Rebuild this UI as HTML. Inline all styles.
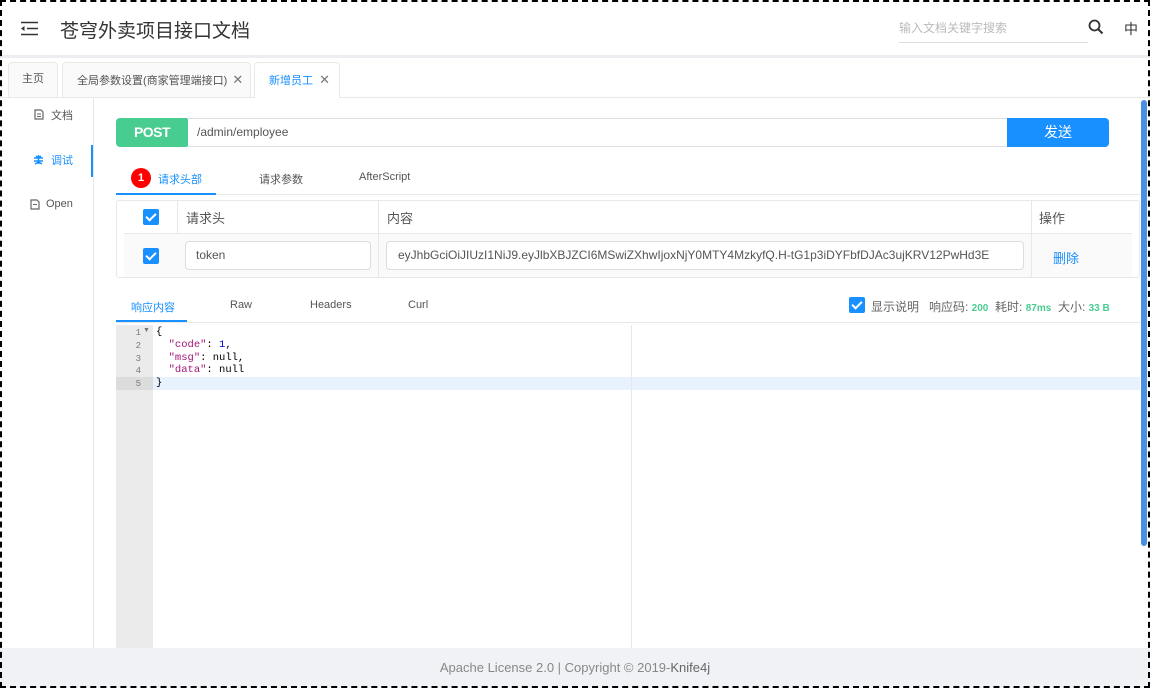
<!DOCTYPE html>
<html><head><meta charset="utf-8">
<style>
*{box-sizing:border-box;margin:0;padding:0}
body{width:1150px;height:688px;overflow:hidden;background:#fff;font-family:"Liberation Sans","Noto Sans CJK SC",sans-serif;color:#555;position:relative;font-size:12px}
.a{position:absolute}
.frame{position:absolute;left:0;top:0;width:1150px;height:688px;border:2px dashed #000;z-index:50;pointer-events:none}
.cb{position:absolute;width:16px;height:16px;background:#1890ff;border-radius:2px}
.cb:after{content:"";position:absolute;left:5px;top:2px;width:4px;height:8px;border:solid #fff;border-width:0 2px 2px 0;transform:rotate(45deg)}
.mono{font-family:"Liberation Mono",monospace;font-size:11px}
</style></head><body>
<div class="frame"></div>
<div class="a" style="left:0;top:0;width:1150px;height:55px;background:#fff"></div>
<svg class="a" style="left:21px;top:21px" width="18" height="15"><path d="M0 1.5H17M6 7.5H17M0 13.5H17" stroke="#333" stroke-width="1.6"/><path d="M0 7.5L3.5 5V10Z" fill="#333"/></svg>
<div class="a" style="left:60px;top:16px;font-size:19px;color:#333">苍穹外卖项目接口文档</div>
<div class="a" style="left:899px;top:19px;font-size:12px;color:#bbb">输入文档关键字搜索</div>
<div class="a" style="left:899px;top:42px;width:189px;height:1px;background:#ddd"></div>
<svg class="a" style="left:1088px;top:19px" width="16" height="16"><circle cx="6.5" cy="6.5" r="5" stroke="#333" stroke-width="1.8" fill="none"/><path d="M10 10L14.5 14.5" stroke="#333" stroke-width="2"/></svg>
<div class="a" style="left:1124px;top:19px;font-size:14px;color:#333">中</div>
<div class="a" style="left:0;top:55px;width:1150px;height:3px;background:#eceef2"></div>
<div class="a" style="left:0;top:97px;width:1150px;height:1px;background:#e8e8e8"></div>
<div class="a" style="left:8px;top:62px;width:50px;height:36px;background:#fafafa;border:1px solid #e8e8e8;border-radius:4px 4px 0 0;font-size:11px;color:#555;text-align:center;line-height:33px">主页</div>
<div class="a" style="left:62px;top:62px;width:189px;height:36px;background:#fafafa;border:1px solid #e8e8e8;border-radius:4px 4px 0 0;font-size:11px;color:#555;line-height:33px;padding-left:14px">全局参数设置(商家管理端接口) <span style="font-size:13px;color:#777;margin-left:2px">✕</span></div>
<div class="a" style="left:254px;top:62px;width:86px;height:36px;background:#fff;border:1px solid #e8e8e8;border-bottom:none;border-radius:4px 4px 0 0;font-size:11px;color:#1890ff;line-height:33px;padding-left:14px">新增员工 <span style="font-size:13px;color:#777;margin-left:3px">✕</span></div>
<div class="a" style="left:93px;top:98px;width:1px;height:550px;background:#e8e8e8"></div>
<div class="a" style="left:91px;top:145px;width:2px;height:32px;background:#1890ff"></div>
<svg class="a" style="left:34px;top:109px" width="10" height="11"><path d="M1 1H7L9 3V10H1Z" fill="none" stroke="#666" stroke-width="1.2"/><path d="M3 5H7M3 7.5H7" stroke="#666"/></svg>
<div class="a" style="left:51px;top:107px;font-size:11px;color:#555">文档</div>
<svg class="a" style="left:33px;top:154px" width="11" height="11"><path d="M5.5 1V10M1 4H10M1 7H10M2 10L5.5 8L9 10M3 2L5.5 4L8 2" stroke="#1890ff" stroke-width="1.5" fill="none"/></svg>
<div class="a" style="left:51px;top:152px;font-size:11px;color:#1890ff">调试</div>
<svg class="a" style="left:30px;top:199px" width="10" height="11"><path d="M1 1H7L9 3V10H1Z" fill="none" stroke="#666" stroke-width="1.2"/><path d="M3 5.5H7" stroke="#666"/></svg>
<div class="a" style="left:46px;top:198px;font-size:11px;color:#555">Open</div>
<div class="a" style="left:116px;top:118px;width:72px;height:29px;background:#49cc90;border-radius:4px 0 0 4px;color:#fff;font-weight:bold;font-size:14px;text-align:center;line-height:29px;letter-spacing:-0.5px">POST</div>
<div class="a" style="left:187px;top:118px;width:822px;height:29px;border:1px solid #e0e0e0;border-left:none;font-size:12px;color:#555;line-height:27px;padding-left:10px">/admin/employee</div>
<div class="a" style="left:1007px;top:118px;width:102px;height:29px;background:#1890ff;border-radius:0 4px 4px 0;color:#fff;font-size:14px;text-align:center;line-height:29px">发送</div>
<div class="a" style="left:131px;top:168px;width:20px;height:20px;border-radius:50%;background:#f00;color:#fff;font-size:11px;font-weight:bold;text-align:center;line-height:20px">1</div>
<div class="a" style="left:158px;top:171px;font-size:11px;color:#1890ff">请求头部</div>
<div class="a" style="left:259px;top:171px;font-size:11px;color:#555">请求参数</div>
<div class="a" style="left:359px;top:171px;font-size:11px;color:#555">AfterScript</div>
<div class="a" style="left:116px;top:194px;width:1024px;height:1px;background:#e8e8e8"></div>
<div class="a" style="left:116px;top:193px;width:100px;height:2px;background:#1890ff"></div>
<div class="a" style="left:116px;top:200px;width:1024px;height:78px;border:1px solid #e8e8e8;border-radius:3px"></div>
<div class="a" style="left:124px;top:233px;width:1008px;height:44px;background:#fafafa"></div>
<div class="a" style="left:124px;top:233px;width:1008px;height:1px;background:#e8e8e8"></div>
<div class="a" style="left:177px;top:201px;width:1px;height:32px;background:#e8e8e8"></div>
<div class="a" style="left:378px;top:201px;width:1px;height:76px;background:#e8e8e8"></div>
<div class="a" style="left:1031px;top:201px;width:1px;height:76px;background:#e8e8e8"></div>
<div class="cb" style="left:143px;top:209px"></div>
<div class="cb" style="left:143px;top:248px"></div>
<div class="a" style="left:186px;top:208px;font-size:13px;color:#555">请求头</div>
<div class="a" style="left:387px;top:208px;font-size:13px;color:#555">内容</div>
<div class="a" style="left:1039px;top:208px;font-size:13px;color:#555">操作</div>
<div class="a" style="left:185px;top:241px;width:186px;height:29px;border:1px solid #ddd;border-radius:4px;background:#fff;font-size:12px;color:#555;line-height:27px;padding-left:10px">token</div>
<div class="a" style="left:386px;top:241px;width:638px;height:29px;border:1px solid #ddd;border-radius:4px;background:#fff;font-size:12px;color:#555;line-height:27px;padding-left:11px;overflow:hidden;white-space:nowrap">eyJhbGciOiJIUzI1NiJ9.eyJlbXBJZCI6MSwiZXhwIjoxNjY0MTY4MzkyfQ.H-tG1p3iDYFbfDJAc3ujKRV12PwHd3E</div>
<div class="a" style="left:1053px;top:248px;font-size:13px;color:#1890ff">删除</div>
<div class="a" style="left:131px;top:299px;font-size:11px;color:#1890ff">响应内容</div>
<div class="a" style="left:230px;top:299px;font-size:11px;color:#555">Raw</div>
<div class="a" style="left:310px;top:299px;font-size:11px;color:#555">Headers</div>
<div class="a" style="left:408px;top:299px;font-size:11px;color:#555">Curl</div>
<div class="a" style="left:116px;top:322px;width:1024px;height:1px;background:#e8e8e8"></div>
<div class="a" style="left:116px;top:320px;width:71px;height:2px;background:#1890ff"></div>
<div class="cb" style="left:849px;top:297px"></div>
<div class="a" style="left:871px;top:298px;font-size:12px;color:#666;white-space:nowrap">显示说明 &nbsp; 响应码: <b style="color:#49cc90;font-size:10px">200</b> &nbsp;耗时: <b style="color:#49cc90;font-size:10px">87ms</b> &nbsp;大小: <b style="color:#49cc90;font-size:10px">33 B</b></div>
<div class="a" style="left:116px;top:325px;width:37px;height:323px;background:#ebebeb"></div>
<div class="a" style="left:116px;top:377px;width:37px;height:13px;background:#dcdcdc"></div>
<div class="a" style="left:153px;top:377px;width:987px;height:13px;background:#e8f2fe"></div>
<div class="a" style="left:631px;top:325px;width:1px;height:323px;background:#e8e8e8"></div>
<div class="a mono" style="left:116px;top:327px;width:25px;text-align:right;color:#777;font-size:9px;line-height:12.8px">1<br>2<br>3<br>4<br>5</div>
<div class="a" style="left:143px;top:327px;font-size:7px;color:#777">▼</div>
<div class="a mono" style="left:156px;top:326px;line-height:12.8px;white-space:pre;color:#000;font-size:10.5px">{
  <span style="color:#a31578">"code"</span>: <span style="color:#0000cd">1</span>,
  <span style="color:#a31578">"msg"</span>: null,
  <span style="color:#a31578">"data"</span>: null
}</div>
<div class="a" style="left:1141px;top:100px;width:6px;height:446px;background:#4a90e2;border-radius:3px"></div>
<div class="a" style="left:0;top:648px;width:1150px;height:40px;background:#f0f2f5;text-align:center;line-height:40px;font-size:13px;color:#888">Apache License 2.0 | Copyright © 2019-<span style="color:#666">Knife4j</span></div>
</body></html>
